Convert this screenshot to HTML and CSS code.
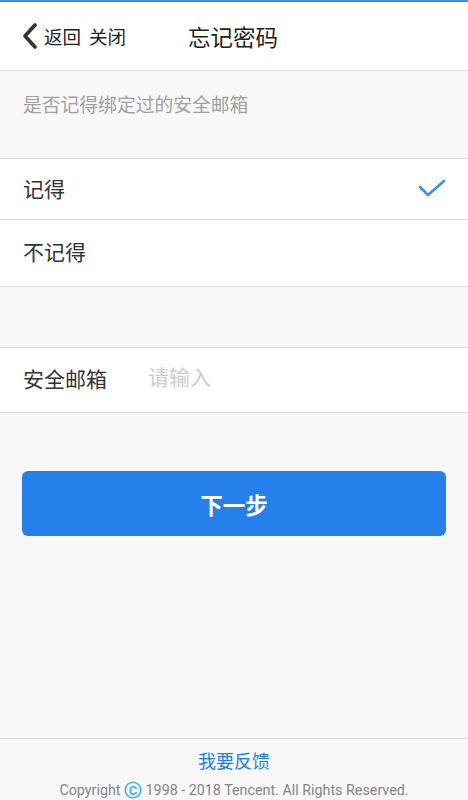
FILE: index.html
```html
<!DOCTYPE html>
<html>
  <head>
    <meta name="viewport" content="width=device-width,initial-scale=1.0">
    <title>忘记密码</title>
    <link rel="stylesheet" href="styles.css">
  </head>
  <body>
    <div class="page">
      <div class="top-bar">
        <div class="nav-left">
          <svg class="back-icon" width="16" height="26" viewBox="0 0 16 26">
            <path d="M13 2 L3 13 L13 24" fill="none" stroke="#333" stroke-width="3.6" stroke-linecap="round" stroke-linejoin="round"/>
          </svg>
          <span>返回</span>
          <span class="close">关闭</span>
        </div>
        <div class="title">忘记密码</div>
      </div>

      <div class="main">
        <div class="hint">是否记得绑定过的安全邮箱</div>

        <ul class="choices">
          <li class="choice choice-first">
            <span>记得</span>
            <svg width="28" height="20" viewBox="0 0 28 20">
              <path d="M2 8 L10 16 L26 2" fill="none" stroke="#3a8ee6" stroke-width="2.6" stroke-linecap="round" stroke-linejoin="round"/>
            </svg>
          </li>
          <li class="choice choice-last"><span>不记得</span></li>
        </ul>

        <div class="field">
          <label for="email">安全邮箱</label>
          <input id="email" placeholder="请输入" autocomplete="off" />
        </div>

        <div class="actions">
          <button class="next-btn">下一步</button>
        </div>
      </div>

      <div class="footer">
        <a class="feedback" href="#">我要反馈</a>
        <div class="copyright">
          Copyright
          <svg class="c-mark" width="18" height="18" viewBox="0 0 18 18">
            <circle cx="9" cy="9" r="7.8" fill="none" stroke="#3cb4ea" stroke-width="1.6"/>
            <text x="9" y="13.6" text-anchor="middle" font-family="Roboto, sans-serif" font-size="13" font-weight="bold" fill="#3cb4ea">C</text>
          </svg>
          1998 - 2018 Tencent. All Rights Reserved.
        </div>
      </div>
    </div>
  </body>
</html>
```

FILE: styles.css
```css
body {
  margin: 0;
  background: #f8f8f8;
  font-family: Roboto, "Noto Sans CJK SC", sans-serif;
  color: #333;
}

.page {
  min-height: 100vh;
  display: flex;
  flex-direction: column;
}

/* header */
.top-bar {
  height: 68px;
  background: #fff;
  border-top: 2px solid #3b8df0;
  border-bottom: 1px solid #e2e2e2;
  display: flex;
  align-items: center;
  padding: 0 24px;
}
.nav-left {
  display: flex;
  align-items: center;
  font-size: 18.5px;
  color: #222;
  width: 164px;
}
.back-icon { margin-left: -2px; margin-right: 6px; }
.close { margin-left: 8px; }
.title {
  font-size: 22.5px;
  color: #222;
}

.main { flex: 1; }

.hint {
  height: 87px;
  box-sizing: border-box;
  padding: 24px 23px 0;
  font-size: 18.8px;
  line-height: 22px;
  color: #a0a0a0;
}

.choices {
  list-style-type: none;
  margin: 0;
  padding: 0;
  background: #fff;
  border-top: 1px solid #dedede;
  border-bottom: 1px solid #dedede;
}
.choice {
  display: flex;
  align-items: center;
  justify-content: space-between;
  padding: 0 22px 0 23px;
  font-size: 21px;
  color: #333;
}
.choice-first {
  height: 60px;
  border-bottom: 1px solid #dedede;
}
.choice-first span { margin-top: -2px; }
.choice-last { height: 66px; }
.choice-last span { margin-top: -4px; }

.field {
  margin-top: 60px;
  height: 64px;
  background: #fff;
  border-top: 1px solid #dedede;
  border-bottom: 1px solid #dedede;
  display: flex;
  align-items: center;
  padding: 0 23px;
}
.field label {
  font-size: 21px;
  color: #333;
  width: 125px;
  margin-top: -4px;
}
.field input {
  border: none;
  outline: none;
  flex-grow: 1;
  font-family: inherit;
  font-size: 21px;
  padding: 0;
  color: #333;
  margin-top: -4px;
}
.field input::placeholder { color: #cccccc; }

.actions { padding: 58px 22px 0 22px; }
.next-btn {
  width: 100%;
  height: 65px;
  border: none;
  border-radius: 6px;
  background: #2680eb;
  color: #fff;
  font-family: inherit;
  font-size: 22.5px;
  font-weight: bold;
}

/* footer */
.footer {
  border-top: 1px solid #d8d8d8;
  height: 62px;
  box-sizing: border-box;
  text-align: center;
  padding-top: 12px;
}
.feedback {
  display: block;
  color: #1b7ef0;
  text-decoration: none;
  font-size: 18px;
  line-height: 22px;
}
.copyright {
  margin-top: 8px;
  font-size: 14.3px;
  line-height: 18px;
  color: #858585;
}
.c-mark { vertical-align: -4px; }
```
